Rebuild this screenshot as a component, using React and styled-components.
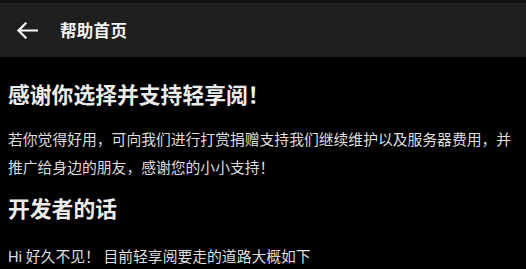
import React from "react";
import styled, { createGlobalStyle } from "styled-components";

const GlobalStyle = createGlobalStyle`
  html, body {
    margin: 0;
    padding: 0;
    background: #000;
  }
  body {
    font-family: Roboto, "Noto Sans CJK SC", sans-serif;
    color: #fff;
  }
`;

const Page = styled.div`
  width: 526px;
  min-height: 269px;
  background: #000;
`;

const StatusStrip = styled.div`
  height: 3px;
  background: #121212;
`;

const Toolbar = styled.header`
  height: 54px;
  background: #1f1f1f;
  display: flex;
  align-items: center;
  padding-left: 17px;
`;

const BackButton = styled.button`
  border: 0;
  background: none;
  padding: 0;
  width: 22px;
  height: 18px;
  display: flex;
  align-items: center;
  color: #fff;
  cursor: pointer;
`;

const Title = styled.h1`
  margin: 0 0 0 21px;
  font-size: 16.5px;
  font-weight: 700;
  color: #f2f2f2;
  letter-spacing: 0.3px;
`;

const Content = styled.main`
  padding: 24px 8px 0 8px;
`;

const Heading = styled.h2`
  margin: ${(p) => p.$top || 0}px 0 0;
  font-size: 21.8px;
  line-height: 30px;
  font-weight: 700;
  color: #ececec;
`;

const Paragraph = styled.p`
  margin: ${(p) => p.$top || 0}px 0 0;
  font-size: 14.8px;
  line-height: 28px;
  color: #dedede;
`;

const BackIcon = () => (
  <svg width="21" height="17" viewBox="0 0 21 17" fill="none">
    <path
      d="M1.5 8.5H20M8.5 1.5L1.5 8.5L8.5 15.5"
      stroke="currentColor"
      strokeWidth="2.2"
      strokeLinecap="square"
    />
  </svg>
);

export default function App() {
  return (
    <>
      <GlobalStyle />
      <Page>
        <StatusStrip />
        <Toolbar>
          <BackButton aria-label="back">
            <BackIcon />
          </BackButton>
          <Title>帮助首页</Title>
        </Toolbar>
        <Content>
          <Heading>感谢你选择并支持轻享阅！</Heading>
          <Paragraph $top={15}>
            若你觉得好用，可向我们进行打赏捐赠支持我们继续维护以及服务器费用，并推广给身边的朋友，感谢您的小小支持！
          </Paragraph>
          <Heading $top={13}>开发者的话</Heading>
          <Paragraph $top={18}>Hi 好久不见！ 目前轻享阅要走的道路大概如下</Paragraph>
        </Content>
      </Page>
    </>
  );
}
